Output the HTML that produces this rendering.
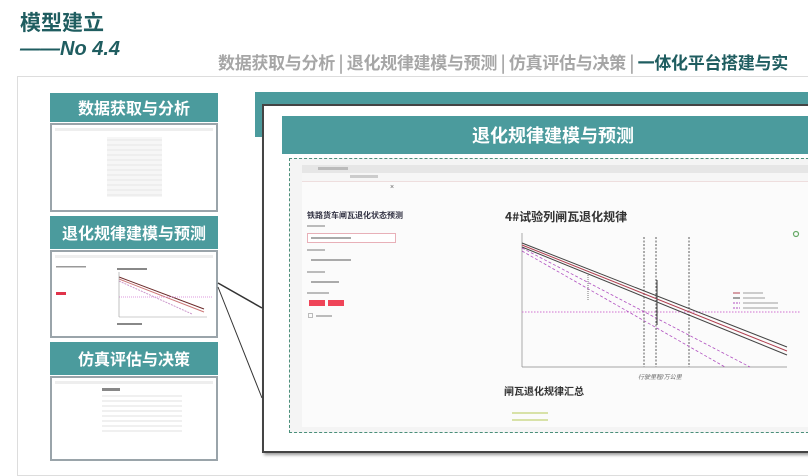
<!DOCTYPE html>
<html><head><meta charset="utf-8"><style>
*{margin:0;padding:0;box-sizing:border-box}
body{width:808px;height:455px;overflow:hidden;background:#fff;font-family:"Liberation Sans","Noto Sans CJK SC",sans-serif;position:relative}
.a{position:absolute}
.hd{background:#4b9b9d;color:#fff;font-weight:bold;text-align:center;font-family:"Noto Sans CJK SC",sans-serif}
.th{border:2px solid #9aa4aa;background:#fff}
</style></head><body>
<div class="a" style="left:20px;top:7px;font-size:21px;font-weight:bold;color:#1f5d60;font-family:'Noto Sans CJK SC',sans-serif">模型建立</div>
<div class="a" style="left:20px;top:38px;font-size:20px;font-weight:bold;font-style:italic;color:#1f5d60">——No 4.4</div>
<div class="a" style="left:218px;top:49px;font-size:17px;color:#a6a6a6;white-space:nowrap;font-family:'Noto Sans CJK SC',sans-serif;font-weight:bold;letter-spacing:-0.3px">数据获取与分析 | 退化规律建模与预测 | 仿真评估与决策 | <span style="color:#1f5d60">一体化平台搭建与实</span></div>
<div class="a" style="left:17px;top:76px;width:800px;height:400px;border:1px solid #ddd;background:#fff"></div>

<div class="a hd" style="left:50px;top:93px;width:168px;height:29px;font-size:16px;line-height:29px">数据获取与分析</div>
<div class="a th" style="left:50px;top:123px;width:168px;height:89px">
<svg width="164" height="85"><rect x="3" y="3" width="158" height="3" fill="#eee"/>
<rect x="55" y="12" width="55" height="60" fill="#f6f6f6"/>
<g stroke="#e2e2e2" stroke-width="0.8"><line x1="55" y1="15" x2="110" y2="15"/><line x1="55" y1="20" x2="110" y2="20"/><line x1="55" y1="25" x2="110" y2="25"/><line x1="55" y1="30" x2="110" y2="30"/><line x1="55" y1="35" x2="110" y2="35"/><line x1="55" y1="40" x2="110" y2="40"/><line x1="55" y1="45" x2="110" y2="45"/><line x1="55" y1="50" x2="110" y2="50"/><line x1="55" y1="55" x2="110" y2="55"/><line x1="55" y1="60" x2="110" y2="60"/><line x1="55" y1="65" x2="110" y2="65"/><line x1="55" y1="70" x2="110" y2="70"/></g></svg></div>

<div class="a hd" style="left:50px;top:216px;width:168px;height:33px;font-size:16px;line-height:33px">退化规律建模与预测</div>
<div class="a th" style="left:50px;top:250px;width:168px;height:88px">
<svg width="164" height="84"><rect x="3" y="3" width="158" height="3" fill="#eee"/>
<rect x="4" y="14" width="30" height="1.5" fill="#999"/>
<rect x="4" y="40" width="10" height="3" fill="#e0334a"/>
<g stroke-width="1"><line x1="67" y1="25" x2="152" y2="57" stroke="#6b2a2a"/><line x1="67" y1="27" x2="152" y2="60" stroke="#c77"/><line x1="67" y1="29" x2="140" y2="62" stroke="#c9c" stroke-dasharray="2 1"/></g>
<line x1="67" y1="45" x2="160" y2="45" stroke="#d9d" stroke-dasharray="1 1"/>
<line x1="67" y1="20" x2="67" y2="65" stroke="#999" stroke-width="0.6"/><line x1="67" y1="65" x2="155" y2="65" stroke="#999" stroke-width="0.6"/>
<rect x="65" y="16" width="30" height="2" fill="#888"/><rect x="65" y="71" width="25" height="2" fill="#888"/></svg></div>

<div class="a hd" style="left:50px;top:342px;width:168px;height:33px;font-size:16px;line-height:33px">仿真评估与决策</div>
<div class="a th" style="left:50px;top:376px;width:168px;height:85px">
<svg width="164" height="80"><rect x="3" y="3" width="158" height="3" fill="#eee"/><rect x="50" y="10" width="18" height="3" fill="#888"/>
<g stroke="#e2e2e2"><line x1="50" y1="18" x2="130" y2="18"/><line x1="50" y1="23" x2="130" y2="23"/><line x1="50" y1="28" x2="130" y2="28"/><line x1="50" y1="33" x2="130" y2="33"/><line x1="50" y1="38" x2="130" y2="38"/><line x1="50" y1="43" x2="130" y2="43"/><line x1="50" y1="48" x2="130" y2="48"/><line x1="50" y1="53" x2="130" y2="53"/></g></svg></div>

<div class="a" style="left:255px;top:92px;width:560px;height:45px;background:#4b9b9d"></div>
<div class="a" style="left:262px;top:104px;width:560px;height:349px;background:#fff;border:2px solid #444;border-right:none;box-shadow:2px 2px 3px #999"></div>
<svg class="a" style="left:210px;top:270px" width="60" height="140"><polyline points="8,13 52,38" stroke="#333" stroke-width="1.5" fill="none"/><polyline points="8,17 52,128" stroke="#333" stroke-width="1" fill="none"/></svg>
<div class="a hd" style="left:282px;top:116px;width:526px;height:38px;font-size:18px;line-height:38px;text-align:left;padding-left:190px">退化规律建模与预测</div>
<div class="a" style="left:289px;top:158px;width:530px;height:275px;border:1.5px dashed #4a8f7a;background:#f4f4f4"></div>
<div class="a" style="left:302px;top:165px;width:506px;height:262px;background:#fbfbfb"></div>
<div class="a" style="left:302px;top:165px;width:506px;height:8px;background:#e6e6e6"></div>
<div class="a" style="left:302px;top:173px;width:506px;height:9px;background:#f6f6f6;border-bottom:1px solid #eedede"></div>
<div class="a" style="left:318px;top:167px;width:30px;height:3px;background:#bbb"></div>
<div class="a" style="left:350px;top:175px;width:28px;height:3px;background:#ccc"></div>
<div class="a" style="left:390px;top:184px;font-size:7px;color:#666">×</div>
<div class="a" style="left:307px;top:210px;font-size:8px;font-weight:bold;color:#334;font-family:'Noto Sans CJK SC',sans-serif">铁路货车闸瓦退化状态预测</div>
<div class="a" style="left:307px;top:225px;width:18px;height:2px;background:#bbb"></div>
<div class="a" style="left:307px;top:233px;width:89px;height:10px;border:1px solid #e8b0b8;background:#fff"></div>
<div class="a" style="left:311px;top:237px;width:40px;height:2px;background:#aaa"></div>
<div class="a" style="left:307px;top:249px;width:18px;height:2px;background:#bbb"></div>
<div class="a" style="left:311px;top:259px;width:40px;height:2px;background:#aaa"></div>
<div class="a" style="left:307px;top:271px;width:18px;height:2px;background:#bbb"></div>
<div class="a" style="left:311px;top:281px;width:28px;height:2px;background:#aaa"></div>
<div class="a" style="left:307px;top:292px;width:22px;height:2px;background:#bbb"></div>
<div class="a" style="left:309px;top:300px;width:16px;height:6px;background:#ef4458"></div>
<div class="a" style="left:328px;top:300px;width:16px;height:6px;background:#ef4458"></div>
<div class="a" style="left:308px;top:313px;width:5px;height:5px;border:1px solid #bbb"></div>
<div class="a" style="left:316px;top:315px;width:16px;height:2px;background:#bbb"></div>
<div class="a" style="left:505px;top:208px;font-size:12px;font-weight:bold;color:#333;font-family:'Noto Sans CJK SC',sans-serif">4#试验列闸瓦退化规律</div>
<svg class="a" style="left:500px;top:225px" width="308" height="160">
<line x1="22" y1="8" x2="22" y2="142" stroke="#888" stroke-width="0.7"/><line x1="22" y1="142" x2="287" y2="142" stroke="#888" stroke-width="0.7"/>
<g stroke="#333" stroke-dasharray="2 1.5" stroke-width="0.8"><line x1="144" y1="12" x2="144" y2="142"/><line x1="156" y1="12" x2="156" y2="142"/><line x1="189" y1="12" x2="189" y2="142"/></g>
<line x1="22" y1="87" x2="300" y2="87" stroke="#d070d0" stroke-dasharray="1.5 1.5"/>
<line x1="22" y1="18" x2="287" y2="122" stroke="#444" stroke-width="1"/>
<line x1="22" y1="20" x2="287" y2="126" stroke="#b04050" stroke-width="1"/>
<line x1="22" y1="22" x2="287" y2="130" stroke="#444" stroke-width="1"/>
<line x1="22" y1="23" x2="250" y2="142" stroke="#b050c0" stroke-dasharray="3 2" stroke-width="0.8"/>
<line x1="22" y1="26" x2="225" y2="142" stroke="#b050c0" stroke-dasharray="3 2" stroke-width="0.8"/>
<line x1="88" y1="48" x2="88" y2="76" stroke="#777" stroke-dasharray="1 1"/>
<line x1="157" y1="55" x2="157" y2="100" stroke="#555" stroke-width="1.2"/>
<g stroke-width="1"><line x1="233" y1="68" x2="240" y2="68" stroke="#b04050"/><line x1="233" y1="73" x2="240" y2="73" stroke="#444"/><line x1="233" y1="78" x2="240" y2="78" stroke="#b050c0" stroke-dasharray="2 1"/><line x1="233" y1="83" x2="240" y2="83" stroke="#b050c0" stroke-dasharray="2 1"/></g>
<g fill="#ccc"><rect x="243" y="67" width="20" height="2"/><rect x="243" y="72" width="22" height="2"/><rect x="243" y="77" width="35" height="2"/><rect x="243" y="82" width="35" height="2"/></g>
<text x="138" y="154" font-size="6" fill="#666" font-style="italic">行驶里程/万公里</text>
<circle cx="296" cy="9" r="2.5" fill="none" stroke="#6a6" stroke-width="1.2"/>
</svg>
<div class="a" style="left:504px;top:383px;font-size:10px;font-weight:bold;color:#333;font-family:'Noto Sans CJK SC',sans-serif">闸瓦退化规律汇总</div>
<div class="a" style="left:512px;top:412px;width:36px;height:2px;background:#d8e2a8"></div>
<div class="a" style="left:512px;top:419px;width:36px;height:2px;background:#d8e2a8"></div>
</body></html>
